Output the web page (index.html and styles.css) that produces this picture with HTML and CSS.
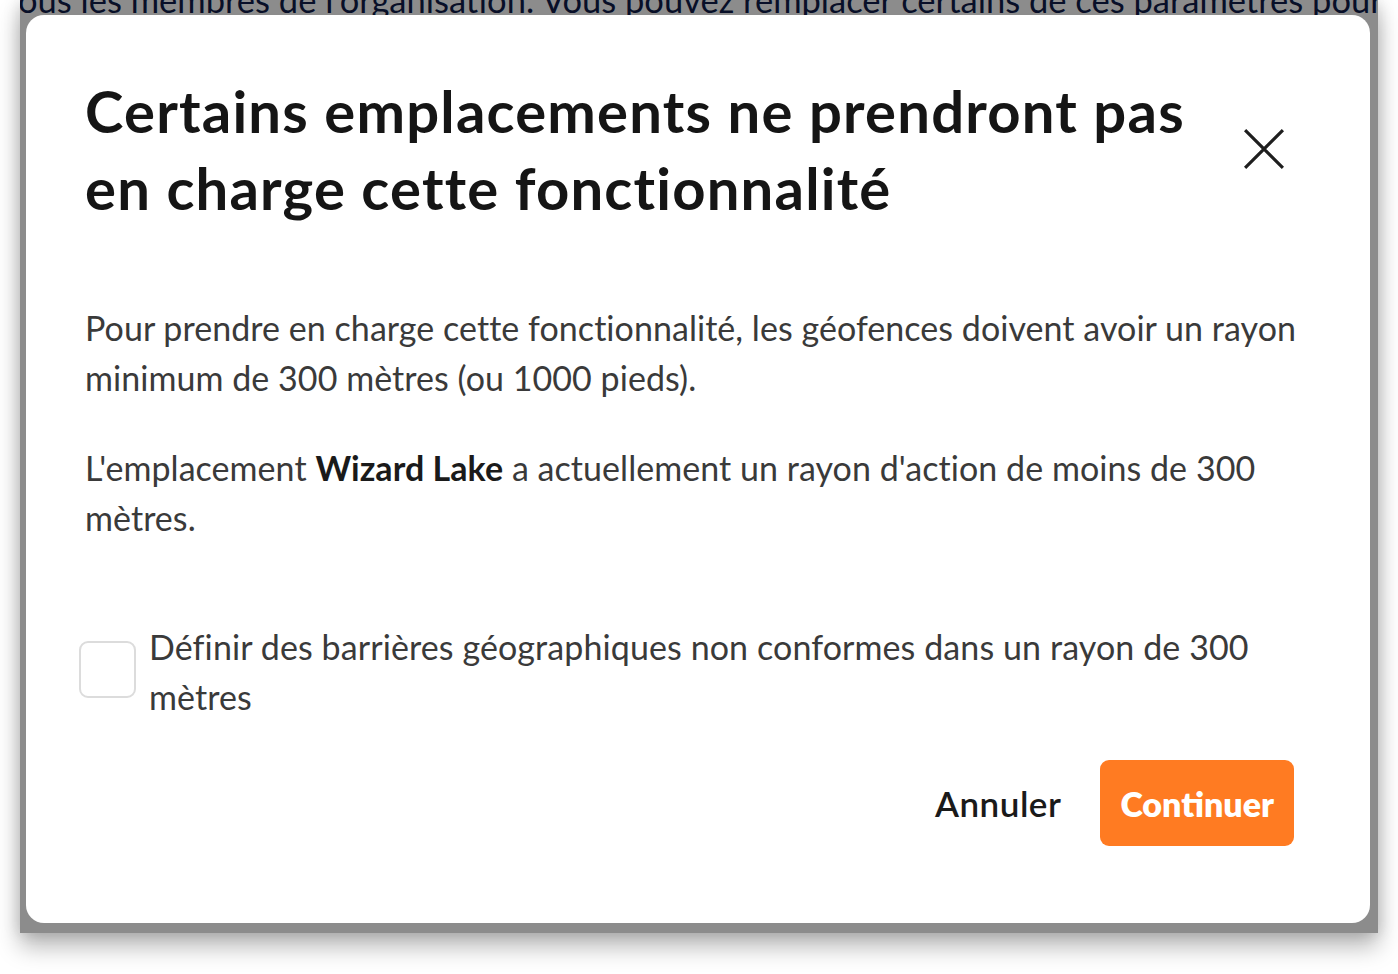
FILE: index.html
```html
<!DOCTYPE html>
<html lang="fr">
<head>
<meta charset="utf-8">
<title>Emplacements</title>
<link rel="stylesheet" href="styles.css">
</head>
<body>
<div class="frame">
  <div class="page">
    <p class="page-line">ous les membres de l'organisation. Vous pouvez remplacer certains de ces paramètres pour</p>
  </div>
  <div class="overlay">
    <div class="modal" role="dialog" aria-labelledby="t">
      <div class="modal-head">
        <h1 id="t" class="modal-title">Certains emplacements ne prendront pas en charge cette fonctionnalité</h1>
        <button class="close" aria-label="Fermer">
          <svg viewBox="0 0 40 40" width="42" height="42"><path d="M2 2 L38 38 M38 2 L2 38" stroke="#1e1e1e" stroke-width="3" fill="none"/></svg>
        </button>
      </div>
      <p class="text p1">Pour prendre en charge cette fonctionnalité, les géofences doivent avoir un rayon minimum de 300 mètres (ou 1000 pieds).</p>
      <p class="text p2">L'emplacement <strong>Wizard Lake</strong> a actuellement un rayon d'action de moins de 300 mètres.</p>
      <label class="check-row">
        <span class="box"></span>
        <span class="check-label">Définir des barrières géographiques non conformes dans un rayon de 300 mètres</span>
      </label>
      <div class="actions">
        <button class="btn-cancel">Annuler</button>
        <button class="btn-primary">Continuer</button>
      </div>
    </div>
  </div>
</div>
</body>
</html>
```
FILE: styles.css
```css
html, body {
  margin: 0;
  padding: 0;
  background: #ffffff;
}
body {
  width: 1398px;
  height: 974px;
  overflow: hidden;
  font-family: Lato, "Noto Sans", sans-serif;
}
.frame {
  position: relative;
  margin-left: 20px;
  width: 1358px;
  height: 933px;
  overflow: hidden;
  box-shadow: 0 14px 22px rgba(0,0,0,0.28), -4px 0 14px rgba(0,0,0,0.08), 4px 0 14px rgba(0,0,0,0.08);
}
.page {
  background: #fff;
  height: 100%;
}
.page-line {
  margin: -22px 0 0 -2px;
  font-size: 34.5px;
  line-height: 44px;
  color: #0f1c4a;
  white-space: nowrap;
}
.overlay {
  position: absolute;
  inset: 0;
  background: rgba(0,0,0,0.45);
  padding: 15px 0 0 6px;
}
.modal {
  box-sizing: border-box;
  width: 1344px;
  height: 908px;
  background: #fff;
  border-radius: 18px;
  padding: 57px 50px 78px 59px;
  display: flex;
  flex-direction: column;
}
.modal-head {
  display: flex;
  align-items: center;
  justify-content: space-between;
}
.modal-title {
  margin: 0;
  width: 1120px;
  font-size: 58px;
  line-height: 77px;
  letter-spacing: 1.2px;
  font-weight: 700;
  color: #151515;
}
.close {
  border: 0;
  background: none;
  padding: 0;
  margin-right: 35px;
  width: 42px;
  height: 42px;
  display: flex;
}
.text {
  margin: 0;
  font-size: 34px;
  line-height: 50px;
  letter-spacing: 0.05px;
  color: #3a3a3a;
}
.text strong {
  color: #1a1a1a;
  font-weight: 700;
}
.p1 { margin-top: 77px; }
.p2 { margin-top: 40px; }
.check-row {
  margin-top: 79px;
  margin-right: 25px;
  display: flex;
  align-items: flex-start;
  gap: 13px;
  margin-left: -6px;
}
.box {
  flex: none;
  box-sizing: border-box;
  width: 57px;
  height: 57px;
  border: 2px solid #dcdcdc;
  border-radius: 9px;
  margin-top: 19px;
}
.check-label {
  font-size: 34px;
  line-height: 50px;
  letter-spacing: 0.1px;
  color: #3a3a3a;
}
.actions {
  margin-top: 38px;
  margin-right: 26px;
  display: flex;
  justify-content: flex-end;
  align-items: center;
  gap: 39px;
}
.btn-cancel {
  border: 0;
  background: none;
  padding: 0;
  font-family: inherit;
  font-size: 35px;
  font-weight: 600;
  letter-spacing: 0.5px;
  color: #1a1a1a;
}
.btn-primary {
  border: 0;
  background: #ff7b22;
  color: #fff;
  font-family: inherit;
  font-size: 34px;
  font-weight: 800;
  height: 86px;
  padding: 0 20px;
  border-radius: 9px;
}
```
